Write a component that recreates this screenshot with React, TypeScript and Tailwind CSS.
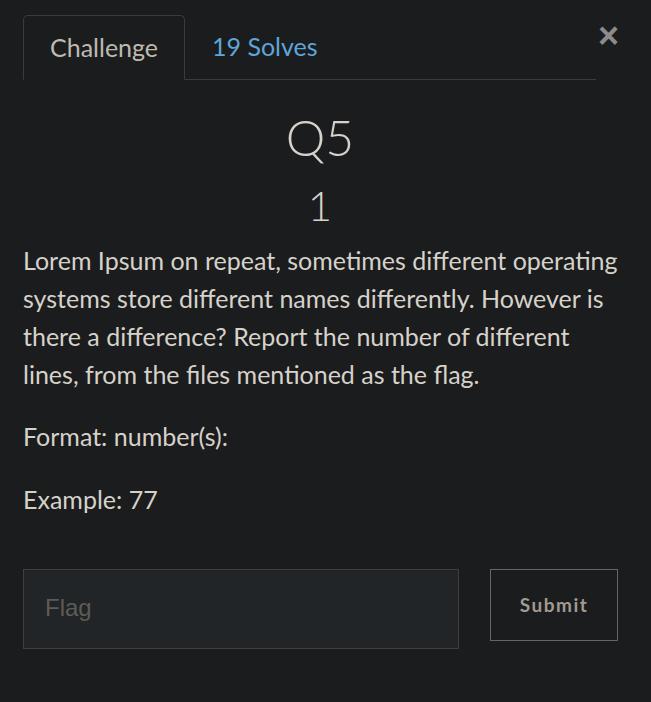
import React from 'react';

const lato = { fontFamily: 'Lato, "Open Sans", sans-serif' };

function Tabs() {
    return (
        <div className="flex items-start">
            <ul className="flex w-[573px] shrink-0 border-b border-[#3a3b3c]">
                <li className="-mb-px h-[65px] flex items-center px-[26px] border border-[#3a3b3c] border-b-[#1b1c1e] rounded-t-[5px] bg-[#1b1c1e] text-[25px] text-[#bfbab0]">
                    Challenge
                </li>
                <li className="h-[64px] flex items-center px-[27px] text-[25px] text-[#5ea5da]">
                    19 Solves
                </li>
            </ul>
            <button className="ml-[2px] mt-[1px] text-[36px] leading-[40px] font-bold text-[#8b8b8b]" style={{ fontFamily: '"Liberation Sans", Arial, sans-serif' }}>
                ×
            </button>
        </div>
    );
}

export default function App() {
    return (
        <div className="min-h-[702px] w-[651px] bg-[#1b1c1e] pl-[23px] pr-[28px] pt-[15px] text-[#d6d2ca]" style={lato}>
            <Tabs />
            <h2 className="mt-[28px] w-[594px] text-center text-[50px] leading-[58px] font-light">Q5</h2>
            <h3 className="mt-[14px] w-[594px] text-center text-[42px] leading-[50px] font-light">1</h3>
            <div className="mt-[11px] text-[25px] leading-[38px]">
                <p>
                    Lorem Ipsum on repeat, sometimes different operating systems store different names differently. However is there a difference? Report the number of different lines, from the files mentioned as the flag.
                </p>
                <p className="mt-[24px]">Format: number(s):</p>
                <p className="mt-[25px]">Example: 77</p>
            </div>
            <div className="mt-[51px] flex items-start">
                <input
                    className="w-[436px] h-[80px] bg-[#212528] border border-[#3e403f] px-[21px] pb-[2px] text-[24px] text-[#d6d2ca] placeholder:text-[#5e5b56] outline-none"
                    style={{ fontFamily: '"Liberation Sans", Arial, sans-serif' }}
                    placeholder="Flag"
                />
                <button className="ml-[31px] w-[128px] h-[72px] border border-[#6b645c] text-[19px] font-bold tracking-[1.5px] text-[#a19b91]">
                    Submit
                </button>
            </div>
        </div>
    );
}
